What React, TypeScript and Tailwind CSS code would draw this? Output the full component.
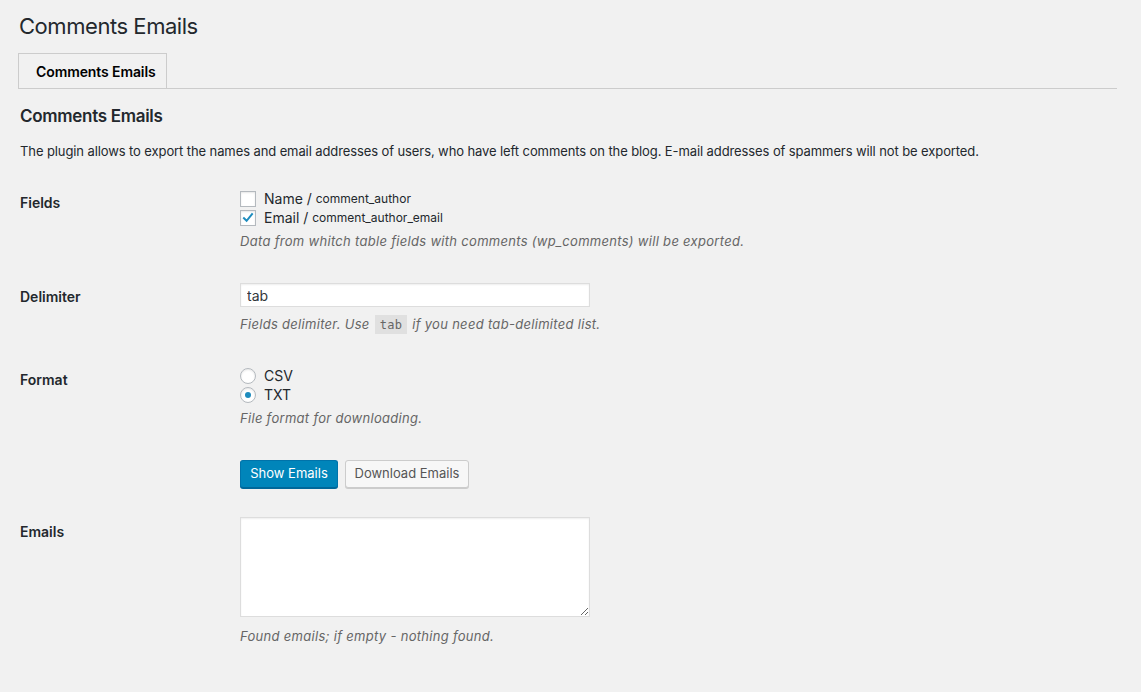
import React from "react";

const font = { fontFamily: "Inter, 'Noto Sans', sans-serif" };

function Checkbox({ checked }: { checked?: boolean }) {
  return (
    <span className="mr-[8px] inline-flex h-[16px] w-[16px] shrink-0 items-center justify-center border border-[#b4b9be] bg-white shadow-[inset_0_1px_2px_rgba(0,0,0,0.1)]">
      {checked && (
        <svg viewBox="0 0 16 16" className="h-[16px] w-[16px]">
          <path d="M3.4 8.2 L6.4 11.2 L12.6 3.6" fill="none" stroke="#1e8cbe" strokeWidth="2.3" strokeLinecap="square" />
        </svg>
      )}
    </span>
  );
}

function Radio({ checked }: { checked?: boolean }) {
  return (
    <span className="mr-[8px] inline-flex h-[16px] w-[16px] shrink-0 items-center justify-center rounded-full border border-[#b4b9be] bg-white shadow-[inset_0_1px_2px_rgba(0,0,0,0.1)]">
      {checked && <span className="h-[6px] w-[6px] rounded-full bg-[#1e8cbe]" />}
    </span>
  );
}

function Row({
  label,
  children,
  tdClass = "pt-[15px] pb-[17px]",
}: {
  label: string;
  children: React.ReactNode;
  tdClass?: string;
}) {
  return (
    <div className="grid grid-cols-[222px_1fr]">
      <div className="pl-[2px] pt-[20px] text-[14px] font-semibold leading-[18px]">{label}</div>
      <div className={tdClass}>{children}</div>
    </div>
  );
}

function Desc({ children, className = "" }: { children: React.ReactNode; className?: string }) {
  return (
    <p className={"text-[13px] italic leading-[19px] tracking-[0.3px] text-[#666] " + className}>{children}</p>
  );
}

export default function App() {
  return (
    <div className="min-h-[692px] bg-[#f1f1f1] text-[#23282d]" style={font}>
      <div className="ml-[18px] mr-[24px] pt-[12px]">
        <h1 className="pl-px text-[22px] font-normal leading-[29px] tracking-[-0.45px]">Comments Emails</h1>

        <nav className="mt-[12px] flex border-b border-[#ccc]">
          <div className="flex h-[35px] w-[149px] items-center border border-b-0 border-[#ccc] bg-[#f1f1f1] pl-[17px] text-[14px] font-semibold tracking-[-0.1px] text-black">
            Comments Emails
          </div>
        </nav>

        <h2 className="mt-[16px] pl-[2px] text-[17px] font-semibold leading-[22px] tracking-[-0.3px]">
          Comments Emails
        </h2>
        <p className="mt-[15px] pl-[2px] text-[13px] leading-[19px] tracking-[-0.1px]">
          The plugin allows to export the names and email addresses of users, who have left comments on the blog. E-mail addresses of spammers will not be exported.
        </p>

        <div className="mt-[13px]">
          <Row label="Fields">
            <label className="flex h-[19px] items-center text-[14px]">
              <Checkbox />
              Name /&nbsp;<span className="text-[12px]">comment_author</span>
            </label>
            <label className="flex h-[19px] items-center text-[14px]">
              <Checkbox checked />
              Email /&nbsp;<span className="text-[12px]">comment_author_email</span>
            </label>
            <Desc className="mt-[5px]">Data from whitch table fields with comments (wp_comments) will be exported.</Desc>
          </Row>

          <Row label="Delimiter" tdClass="pt-[15px] pb-[16px]">
            <input
              defaultValue="tab"
              className="block h-[24px] w-[350px] border border-[#ddd] bg-white px-[6px] text-[14px] text-[#32373c] shadow-[inset_0_1px_2px_rgba(0,0,0,0.07)] outline-none"
            />
            <Desc className="mt-[8px]">
              Fields delimiter. Use{" "}
              <code
                className="mx-px bg-[rgba(0,0,0,0.07)] px-[5px] pb-[2px] pt-[3px] text-[12px] not-italic"
                style={{ fontFamily: "Consolas, Monaco, 'DejaVu Sans Mono', monospace" }}
              >
                tab
              </code>{" "}
              if you need tab-delimited list.
            </Desc>
          </Row>

          <Row label="Format" tdClass="pt-[15px] pb-[15px]">
            <label className="flex h-[19px] items-center text-[14px]">
              <Radio />
              CSV
            </label>
            <label className="flex h-[19px] items-center text-[14px]">
              <Radio checked />
              TXT
            </label>
            <Desc className="mt-[5px]">File format for downloading.</Desc>
          </Row>

          <div className="grid grid-cols-[222px_1fr]">
            <div />
            <div className="flex gap-[7px] pb-[15px] pt-[17px]">
              <button className="h-[28px] w-[98px] rounded-[3px] border border-[#0073aa] border-b-[#006799] bg-[#0085ba] text-[13px] text-white shadow-[0_1px_0_#006799]">
                Show Emails
              </button>
              <button className="h-[28px] w-[124px] rounded-[3px] border border-[#ccc] bg-[#f7f7f7] text-[13px] text-[#555] shadow-[0_1px_0_#ccc]">
                Download Emails
              </button>
            </div>
          </div>

          <Row label="Emails" tdClass="pt-[14px] pb-[16px]">
            <textarea className="block h-[100px] w-[350px] border border-[#ddd] bg-white shadow-[inset_0_1px_2px_rgba(0,0,0,0.07)] outline-none" />
            <Desc className="mt-[10px]">Found emails; if empty - nothing found.</Desc>
          </Row>
        </div>
      </div>
    </div>
  );
}
